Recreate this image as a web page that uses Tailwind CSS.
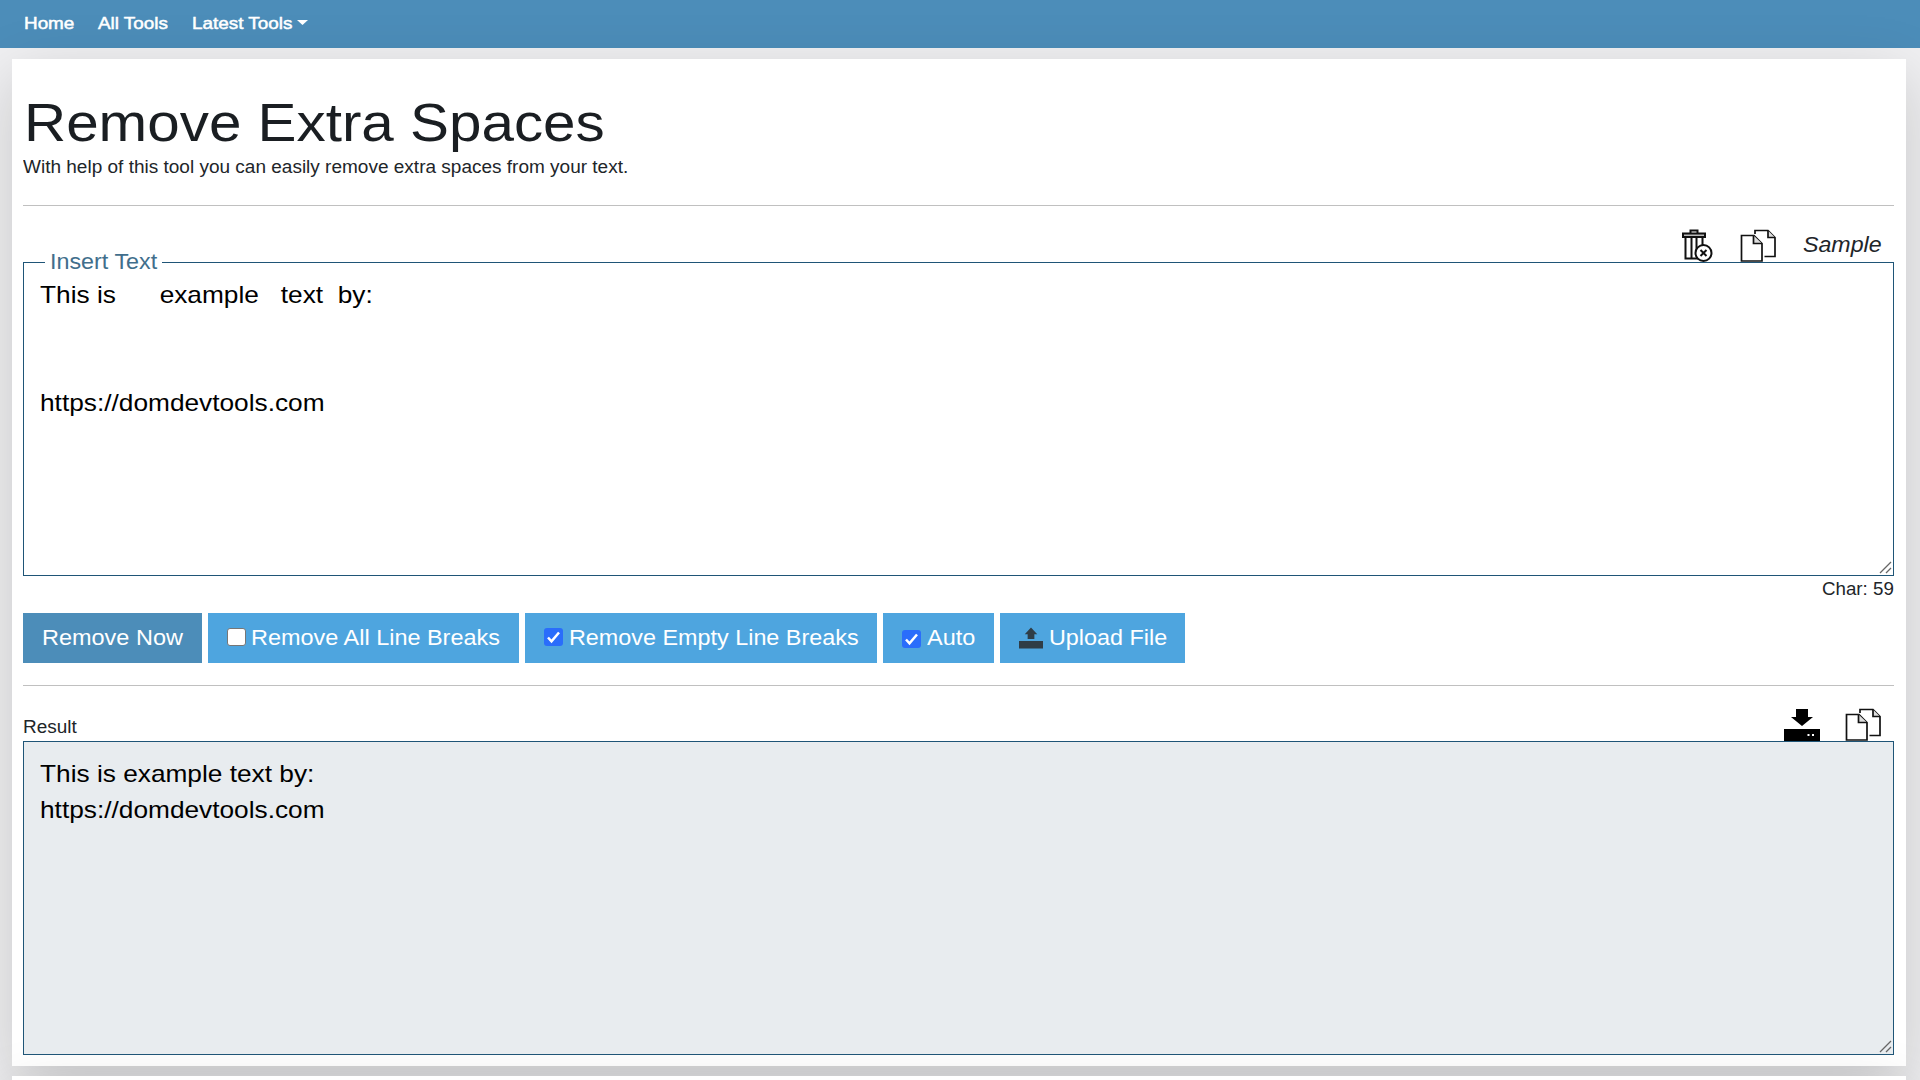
<!DOCTYPE html>
<html lang="en">
<head>
<meta charset="utf-8">
<title>Remove Extra Spaces</title>
<script src="https://cdn.jsdelivr.net/npm/@tailwindcss/browser@4"></script>
</head>
<body class="h-[1080px] overflow-hidden bg-[#f0f0f2] font-['Liberation_Sans',Arial,sans-serif] text-[#212529]">
<nav class="flex h-12 items-center bg-[#4c8db9] pl-6 text-[17px] text-white [-webkit-text-stroke:0.5px_white]">
  <a class="block w-[74px]"><span class="inline-block origin-left scale-x-[1.11] whitespace-nowrap">Home</span></a>
  <a class="block w-[94px]"><span class="inline-block origin-left scale-x-[1.11] whitespace-nowrap">All Tools</span></a>
  <a class="flex items-center"><span class="block w-[105px]"><span class="inline-block origin-left scale-x-[1.11] whitespace-nowrap">Latest Tools</span></span>
    <svg class="mb-[3px] h-[5px] w-[11px]" viewBox="0 0 11 5" fill="white"><path d="M0 0h11L5.500 5z"/></svg></a>
</nav>
<main class="ml-3 mt-[11px] h-[1007px] w-[1894px] bg-white pl-[11px] pr-3 shadow-[0_19px_60px_rgba(0,0,0,0.175)]">
  <header class="h-[146px] pt-[32px]">
    <h1 class="h-[64px] pl-px text-[54px] leading-[62px] text-[#1a1e22]"><span class="inline-block origin-left scale-x-[1.081] whitespace-nowrap">Remove Extra Spaces</span></h1>
    <p class="h-6 text-[17.500px] leading-6"><span class="inline-block origin-left scale-x-[1.086] whitespace-nowrap">With help of this tool you can easily remove extra spaces from your text.</span></p>
  </header>
  <hr class="border-[#c0c0c0]">
  <div class="flex h-[56px] items-end justify-end pr-3">
    <svg class="mr-[27px] h-[33px] w-[32px]" viewBox="0 0 32 33" fill="none" stroke="#111" stroke-width="2"><path d="M2 4.500h22v3.500H2z" fill="#bbb"/><path d="M9.500 4V1.500h7V4M4.500 8v21.500H18M21.500 8v10M10.500 9v20M15.500 9v12"/><circle cx="22.500" cy="24" r="8" fill="#fff"/><path d="M19.500 21l6 6m0-6l-6 6"/></svg>
    <svg class="mr-[26px] h-[33px] w-[37px]" viewBox="0 0 37 33" fill="none" stroke="#111" stroke-width="1.700"><path d="M15 5V1.500h13l7 7V27.500H24.500"/><path d="M28 1.500v7h7" fill="#ddd"/><path d="M1.500 6.500H14l8 8V32H1.500z"/><path d="M13.500 6.500v8H22" fill="#ddd"/></svg>
    <span class="block h-[42px] w-[79px] text-[22.500px] italic leading-[50px]"><span class="inline-block origin-left scale-x-[1.03] whitespace-nowrap">Sample</span></span>
  </div>
  <section class="relative h-[314px] border border-[#1f5577] px-4 pt-[14px]">
    <span class="absolute -top-[15px] left-[21px] h-[28px] w-[117px] bg-white pl-[5px] text-[21.500px] leading-[28px] text-[#416e8c]"><span class="inline-block origin-left scale-x-[1.085] whitespace-nowrap">Insert Text</span></span>
    <div class="text-[24px] leading-[35.900px] text-black"><span class="inline-block origin-left scale-x-[1.094] whitespace-pre">This is      example   text  by:


https://domdevtools.com</span></div>
    <svg class="absolute bottom-px right-px size-[13px]" viewBox="0 0 13 13" stroke="#666" stroke-width="1.300"><path d="M1 12L12 1M7 12l5-5"/></svg>
  </section>
  <div class="flex h-[37px] justify-end text-[17.500px] leading-[27px]"><span class="block w-[72px]"><span class="inline-block origin-left scale-x-[1.07] whitespace-nowrap">Char: 59</span></span></div>
  <div class="flex h-[50px] gap-[6px] text-[22px] leading-[49px] text-white">
    <div class="w-[179px] bg-[#4c8db9] pl-[19px]"><span class="inline-block origin-left scale-x-[1.067] whitespace-nowrap">Remove Now</span></div>
    <div class="flex w-[311px] bg-[#4ea5df] pl-[19px]"><span class="mt-[15px] mr-[5px] block h-[18px] w-[19px] rounded-[3px] border border-[#767676] bg-white"></span><span class="inline-block origin-left scale-x-[1.066] whitespace-nowrap">Remove All Line Breaks</span></div>
    <div class="flex w-[352px] bg-[#4ea5df] pl-[19px]"><svg class="mt-[15px] mr-[6px] h-[18px] w-[19px]" viewBox="0 0 19 18"><rect width="19" height="18" rx="3" fill="#2a6dfb"/><path d="M4 9.500l3.500 3.800L15 4.500" fill="none" stroke="#fff" stroke-width="2.500"/></svg><span class="inline-block origin-left scale-x-[1.062] whitespace-nowrap">Remove Empty Line Breaks</span></div>
    <div class="flex w-[111px] bg-[#4ea5df] pl-[19px]"><svg class="mt-[17px] mr-[6px] h-[18px] w-[19px]" viewBox="0 0 19 18"><rect width="19" height="18" rx="3" fill="#2a6dfb"/><path d="M4 9.500l3.500 3.800L15 4.500" fill="none" stroke="#fff" stroke-width="2.500"/></svg><span class="inline-block origin-left scale-x-[1.066] whitespace-nowrap">Auto</span></div>
    <div class="flex w-[185px] bg-[#4ea5df] pl-[19px]"><svg class="mt-[14px] mr-[6px] h-[22px] w-[24px]" viewBox="0 0 25 22" fill="#2f3d47"><path d="M12.500 0L19 7h-3v5H9V7H6zM0 14h25v8H0z"/></svg><span class="inline-block origin-left scale-x-[1.062] whitespace-nowrap">Upload File</span></div>
  </div>
  <hr class="mt-[22px] border-[#c0c0c0]">
  <div class="flex h-[55px] items-end justify-between pr-3">
    <span class="block text-[17.500px] leading-[28px]"><span class="inline-block origin-left scale-x-[1.085] whitespace-nowrap">Result</span></span>
    <span class="flex">
    <svg class="mr-[25px] h-[33px] w-[36px]" viewBox="0 0 36 33" fill="#000"><path d="M12 1h12v8h5L18 18 7 9h5zM0 21h36v12H0z"/><path d="M23.500 26h2v2h-2zM28 26h2v2h-2z" fill="#fff"/></svg>
    <svg class="h-[33px] w-[37px]" viewBox="0 0 37 33" fill="none" stroke="#111" stroke-width="1.700"><path d="M15 5V1.500h13l7 7V27.500H24.500"/><path d="M28 1.500v7h7" fill="#ddd"/><path d="M1.500 6.500H14l8 8V32H1.500z"/><path d="M13.500 6.500v8H22" fill="#ddd"/></svg>
    </span>
  </div>
  <section class="relative h-[314px] border border-[#1f5577] bg-[#e8ecef] px-4 pt-[14px]">
    <div class="text-[24px] leading-[35.900px] text-black"><span class="inline-block origin-left scale-x-[1.094] whitespace-pre">This is example text by:
https://domdevtools.com</span></div>
    <svg class="absolute bottom-px right-px size-[13px]" viewBox="0 0 13 13" stroke="#666" stroke-width="1.300"><path d="M1 12L12 1M7 12l5-5"/></svg>
  </section>
</main>
<div class="ml-3 mt-[10px] h-10 w-[1894px] bg-white shadow-[0_19px_60px_rgba(0,0,0,0.175)]"></div>
</body>
</html>
